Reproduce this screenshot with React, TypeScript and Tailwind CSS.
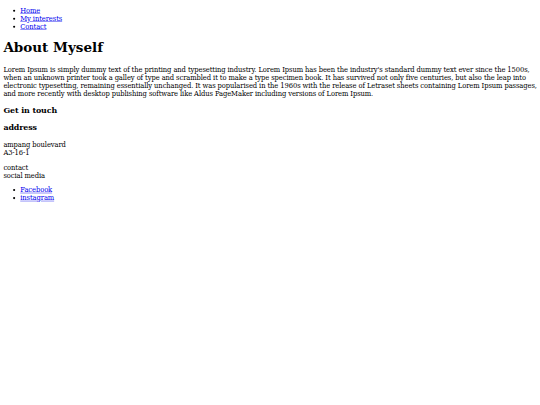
export default function App() {
  const link = "text-[#0000ee] underline"
  return (
    <div className="bg-white h-[405px] w-[540px] overflow-hidden">
      <div className="flow-root w-[1300px] origin-top-left scale-[0.421875] px-2 font-['DejaVu_Serif',serif] text-base leading-[19px] tracking-[-0.013em] text-black">
        <ul className="list-disc pl-10 my-4">
          <li><a href="#" className={link}>Home</a></li>
          <li><a href="#" className={link}>My interests</a></li>
          <li><a href="#" className={link}>Contact</a></li>
        </ul>
        <h1 className="text-[32px] leading-[normal] tracking-normal font-bold mt-[21.44px] mb-[23px]">About Myself</h1>
        <p className="my-[18px]">
          Lorem Ipsum is simply dummy text of the printing and typesetting industry. Lorem Ipsum has been the industry's standard dummy text ever since the 1500s, when an unknown printer took a galley of type and scrambled it to make a type specimen book. It has survived not only five centuries, but also the leap into electronic typesetting, remaining essentially unchanged. It was popularised in the 1960s with the release of Letraset sheets containing Lorem Ipsum passages, and more recently with desktop publishing software like Aldus PageMaker including versions of Lorem Ipsum.
        </p>
        <h3 className="text-[18.72px] leading-[normal] font-bold my-[18.72px]">Get in touch</h3>
        <h3 className="text-[18.72px] leading-[normal] font-bold mt-[18.72px] mb-[20px]">address</h3>
        <p className="mt-[20px] mb-[18px]">
          ampang boulevard
          <br />
          A3-16-1
        </p>
        <p className="mt-[17px] mb-[14px]">
          contact
          <br />
          social media
        </p>
        <ul className="list-disc pl-10 my-[14px]">
          <li><a href="#" className={link}>Facebook</a></li>
          <li><a href="#" className={link}>instagram</a></li>
        </ul>
      </div>
    </div>
  )
}
